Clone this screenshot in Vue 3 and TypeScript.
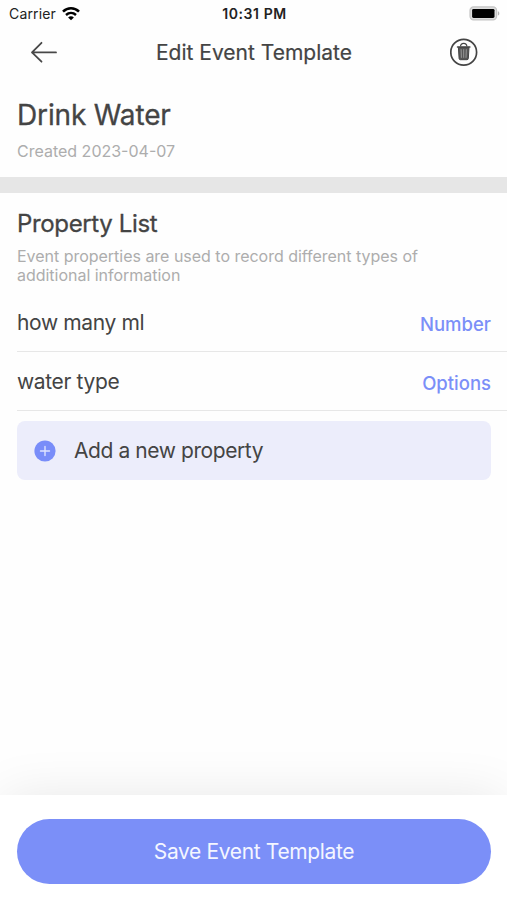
<script setup lang="ts">
interface Property {
  name: string
  type: string
}

const properties: Property[] = [
  { name: 'how many ml', type: 'Number' },
  { name: 'water type', type: 'Options' },
]
</script>

<template>
  <div class="screen">
    <div class="status">
      <div class="carrier">
        <span>Carrier</span>
        <svg class="wifi" width="18" height="14" viewBox="0 0 18 14" fill="none" stroke="#000">
          <path d="M1 4.6C5.6.2 12.4.2 17 4.6" stroke-width="2.6" />
          <path d="M4 8c2.9-2.7 7.1-2.7 10 0" stroke-width="2.4" />
          <path d="M9 13.2 6.1 10.4c1.7-1.5 4.1-1.5 5.8 0z" fill="#000" stroke="none" />
        </svg>
      </div>
      <div class="time">10:31 PM</div>
      <svg class="battery" width="31" height="15" viewBox="0 0 31 15">
        <rect x="1" y=".9" width="26.6" height="13" rx="3.6" fill="#ddd" stroke="#c4c4c4" stroke-width="1.2" />
        <rect x="3.1" y="2.9" width="22.4" height="9" rx="1.4" fill="#000" />
        <path d="M28.9 5.2c1.9.7 1.9 3.7 0 4.4z" fill="#b4b4b4" />
      </svg>
    </div>

    <header class="nav">
      <svg class="back" width="28" height="24" viewBox="0 0 28 24" fill="none" stroke="#484848" stroke-width="1.8" stroke-linecap="round" stroke-linejoin="round">
        <path d="M26 12.4H2M11.5 2.8 2 12.4l9.5 9.3" />
      </svg>
      <h1>Edit Event Template</h1>
      <svg class="trash" width="28" height="28" viewBox="0 0 28 28" fill="none" stroke="#444">
        <circle cx="13.7" cy="14.2" r="12.9" stroke-width="1.7" />
        <path d="M10.5 8.4c.2-4.1 6.2-4.1 6.4 0" stroke-width="1.1" />
        <path d="M7.5 8.9h12.4" stroke-width="1.5" stroke-linecap="round" />
        <path d="M8.4 9.4h10.6l-.7 11.1q-.1 1.2-1.3 1.2h-6.6q-1.2 0-1.3-1.2z" fill="#555" stroke-width="1" />
        <path d="m11.1 11.2.3 8.6M13.7 11.2v8.6M16.3 11.2l-.3 8.6" stroke="#aaa" stroke-width=".8" />
      </svg>
    </header>

    <section class="summary">
      <h2>Drink Water</h2>
      <p>Created 2023-04-07</p>
    </section>

    <section class="list">
      <h3>Property List</h3>
      <p class="hint">Event properties are used to record different types of additional information</p>
      <div v-for="property in properties" :key="property.name" class="row">
        <span class="name">{{ property.name }}</span>
        <span class="type">{{ property.type }}</span>
      </div>
      <button class="add">
        <svg width="22" height="22" viewBox="0 0 22 22">
          <circle cx="11" cy="11" r="10.6" fill="#798df9" />
          <path d="M6.5 11h9M11 6.5v9" stroke="#dfe4ff" stroke-width="1.4" stroke-linecap="round" />
        </svg>
        <span>Add a new property</span>
      </button>
    </section>

    <footer class="footer">
      <button class="save">Save Event Template</button>
    </footer>
  </div>
</template>

<style>
body {
  margin: 0;
  background: #fff;
}
</style>

<style scoped>
.screen {
  display: flex;
  flex-direction: column;
  width: 507px;
  height: 900px;
  overflow: hidden;
  background: #fefefe;
  color: #444;
  font-family: Inter, "Liberation Sans", sans-serif;
}
h1, h2, h3, p {
  margin: 0;
  font-weight: 400;
  white-space: nowrap;
}
button {
  border: 0;
  padding: 0;
  font: inherit;
  color: inherit;
}
.status {
  display: grid;
  grid-template-columns: 1fr auto 1fr;
  align-items: center;
  height: 27px;
  padding: 0 7px 0 9px;
  color: #222;
  font-size: 14px;
}
.carrier {
  display: flex;
  align-items: center;
  gap: 6px;
  letter-spacing: 0.15px;
}
.time {
  font-weight: 600;
  letter-spacing: 0.6px;
}
.battery {
  justify-self: end;
}
.nav {
  display: grid;
  grid-template-columns: 28px 1fr 28px;
  align-items: center;
  height: 50px;
  padding: 0 29px 0 30px;
}
h1 {
  padding-top: 2px;
  font-size: 21px;
  line-height: 28px;
  text-align: center;
  -webkit-text-stroke: 0.2px #444;
}
.summary {
  box-sizing: border-box;
  height: 116px;
  padding: 20px 17px 0;
  border-bottom: 16px solid #e6e6e6;
}
h2 {
  font-size: 28px;
  line-height: 36px;
  letter-spacing: -0.15px;
  -webkit-text-stroke: 0.3px #444;
}
.summary p {
  margin-top: 8px;
  font-size: 16px;
  line-height: 20px;
  color: #adadad;
}
.list {
  flex: 1;
  padding: 15px 0 0 17px;
}
h3 {
  font-size: 24px;
  line-height: 32px;
  letter-spacing: -0.35px;
  -webkit-text-stroke: 0.3px #444;
}
.list .hint {
  width: 420px;
  margin-top: 7px;
  white-space: normal;
  font-size: 16px;
  line-height: 19px;
  letter-spacing: -0.02px;
  color: #adadad;
}
.row {
  display: flex;
  box-sizing: border-box;
  align-items: center;
  justify-content: space-between;
  height: 59px;
  padding-right: 16px;
  border-bottom: 1px solid #e7e7e7;
}
.hint + .row {
  margin-top: 8px;
}
.name {
  font-size: 21px;
  letter-spacing: -0.36px;
}
.type {
  padding-top: 3px;
  color: #7b8ff8;
  font-size: 18.5px;
  font-weight: 500;
}
.add {
  display: flex;
  align-items: center;
  gap: 18px;
  width: 474px;
  height: 59px;
  margin-top: 10px;
  padding-left: 17px;
  border-radius: 8px;
  background: #ecedfb;
  font-size: 21px;
  letter-spacing: -0.42px;
}
.footer {
  box-sizing: border-box;
  height: 105px;
  padding: 24px 16px 0 17px;
  background: #fff;
  box-shadow: 0 0 54px -4px rgba(0, 0, 0, 0.1);
}
.save {
  width: 474px;
  height: 65px;
  border-radius: 33px;
  background: #7b8ff8;
  color: #f4f6ff;
  font-size: 21px;
  letter-spacing: -0.36px;
}
</style>
